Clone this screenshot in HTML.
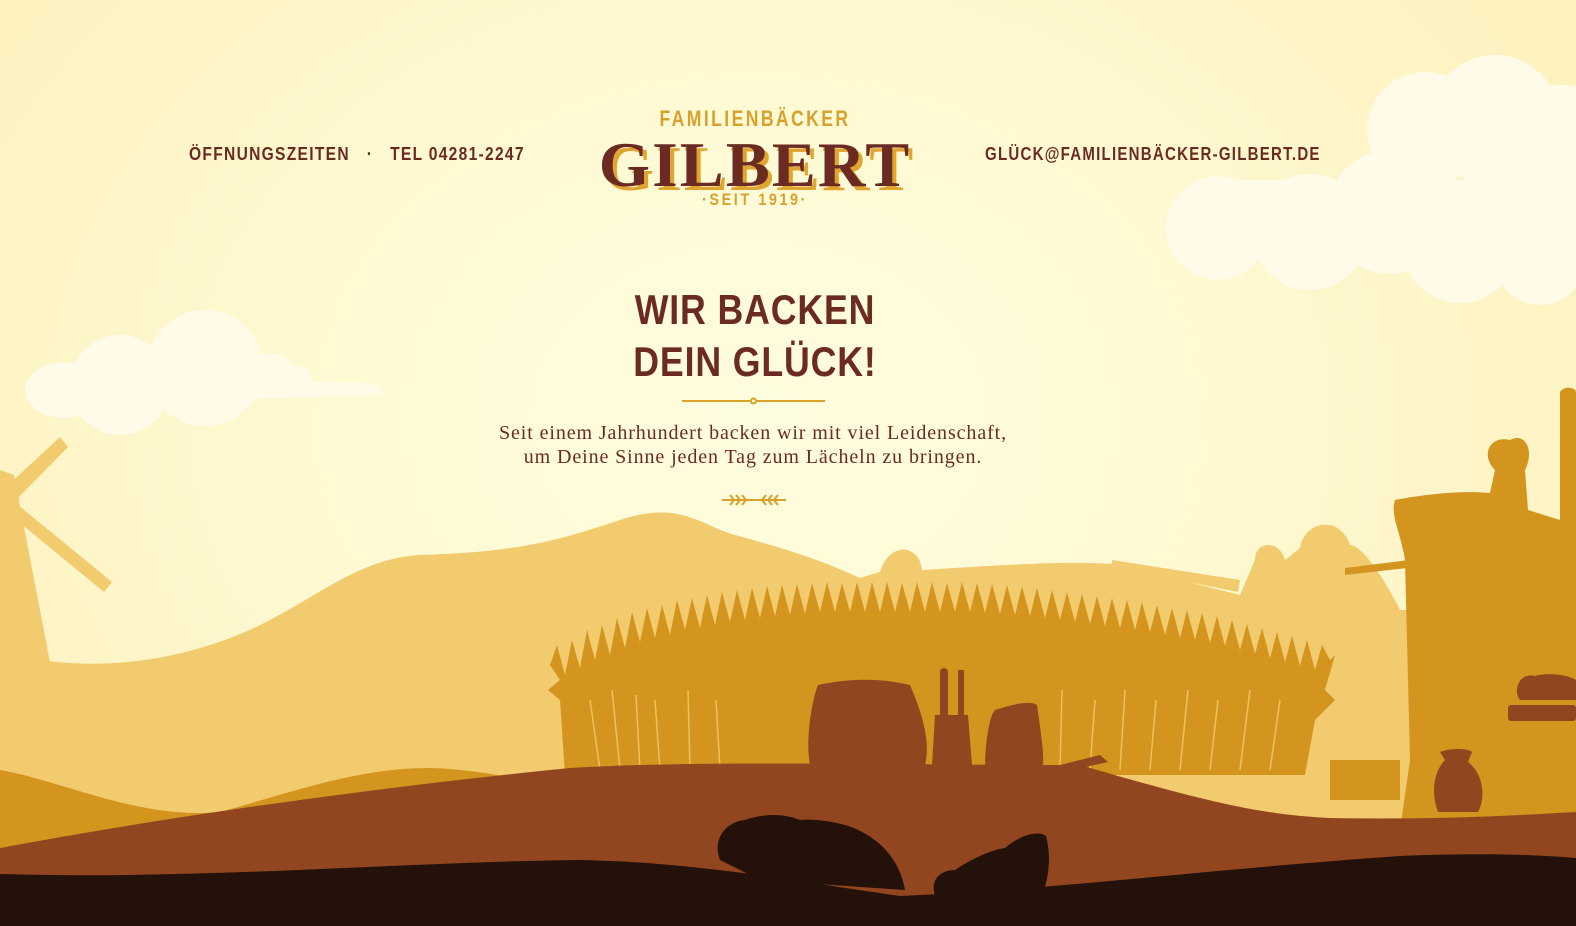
<!DOCTYPE html>
<html><head><meta charset="utf-8"><style>
html,body{margin:0;padding:0}
body{width:1576px;height:926px;overflow:hidden;position:relative;background:radial-gradient(ellipse 900px 700px at 760px 420px,#fffde0 0%,#fffad4 45%,#fdf2c0 100%);font-family:"Liberation Sans",sans-serif}
svg.bg{position:absolute;left:0;top:0}
.nav{position:absolute;top:144px;font-family:"Liberation Sans",sans-serif;font-weight:bold;font-size:18px;letter-spacing:1.5px;color:#6b2a22;transform-origin:0 0;white-space:nowrap}
.logo{position:absolute;left:580px;top:100px;width:350px;text-align:center;color:#6b2a22}
.c{position:absolute;left:0;width:350px;white-space:nowrap}
.fam{font-family:"Liberation Sans",sans-serif;font-weight:bold;color:#d7a12c;font-size:22px;letter-spacing:3px;top:6px;transform:scaleX(.8)}
.gil{font-family:"Liberation Serif",serif;font-weight:bold;font-size:64px;letter-spacing:2px;top:28px;color:#6b2a22;text-shadow:4px 4px 0 #e0a52f;transform:scaleX(1.03)}
.seit{font-family:"Liberation Sans",sans-serif;font-weight:bold;color:#d7a12c;font-size:17px;letter-spacing:3px;top:90px;transform:scaleX(.85)}
h1{position:absolute;left:0;width:1510px;top:284px;margin:0;text-align:center;font-family:"Liberation Sans",sans-serif;font-weight:bold;font-size:42px;line-height:52px;letter-spacing:1px;color:#6b2a22;transform:scaleX(.85);transform-origin:755px 0}
p{position:absolute;left:0;width:1506px;top:421px;margin:0;text-align:center;font-family:"Liberation Serif",serif;font-size:20px;line-height:24px;letter-spacing:.9px;color:#6b2a22}
</style></head><body>
<svg class="bg" width="1576" height="926" viewBox="0 0 1576 926">
<g fill="#fffbe8">
<ellipse cx="65" cy="390" rx="40" ry="28"/><circle cx="120" cy="385" r="50"/><circle cx="205" cy="368" r="58"/><circle cx="272" cy="375" r="22"/><circle cx="298" cy="380" r="14"/><path d="M60 405 L380 395 Q390 385 360 383 L240 380 Z"/>
<circle cx="1218" cy="228" r="52"/><circle cx="1310" cy="232" r="58"/><circle cx="1390" cy="212" r="62"/><circle cx="1460" cy="245" r="58"/><circle cx="1425" cy="130" r="58"/><circle cx="1495" cy="120" r="65"/><circle cx="1560" cy="180" r="95"/><circle cx="1540" cy="260" r="45"/><rect x="1218" y="180" width="358" height="80"/>
</g>
<g fill="#f2cb6e">
<path d="M0 650 C40 665 120 672 200 648 C300 620 340 560 420 555 C520 552 560 540 620 520 C680 500 700 525 735 535 C790 550 820 560 860 578 L880 572 C890 540 920 545 922 570 C1000 565 1080 560 1120 565 L1240 595 L1255 560 C1255 540 1280 540 1285 560 L1300 548 C1305 520 1340 515 1350 545 C1360 545 1380 570 1400 610 L1576 610 L1576 926 L0 926 Z"/>
<path d="M0 470 L14 475 L50 662 L0 665 Z"/>
<path d="M5 488 L60 437 L68 447 L16 500 Z"/>
<path d="M18 505 L112 582 L104 592 L14 518 Z"/>
<path d="M1112 560 L1240 580 L1238 592 L1112 567 Z"/>
</g>
<g fill="#d4951f">
<path d="M0 770 C60 780 140 820 220 812 C300 790 380 760 460 770 C520 776 560 790 560 790 L0 850 Z"/>
<path d="M565 775 L560 700 L548 690 L560 680 L550 665 L557 645 L565 675 L572 640 L580 668 L587 630 L595 660 L602 625 L610 655 L617 618 L625 648 L632 612 L640 642 L647 608 L655 638 L662 605 L670 635 L677 600 L685 630 L692 598 L700 628 L707 595 L715 625 L722 592 L730 622 L737 590 L745 620 L752 588 L760 618 L767 586 L775 616 L782 585 L790 615 L797 584 L805 614 L812 583 L820 612 L827 582 L835 612 L842 583 L850 612 L857 582 L865 612 L872 582 L880 612 L887 582 L895 612 L902 583 L910 612 L917 582 L925 612 L932 582 L940 612 L947 583 L955 612 L962 582 L970 612 L977 583 L985 613 L992 584 L1000 614 L1007 585 L1015 615 L1022 586 L1030 616 L1037 588 L1045 618 L1052 590 L1060 620 L1067 592 L1075 622 L1082 594 L1090 624 L1097 596 L1105 626 L1112 598 L1120 628 L1127 600 L1135 630 L1142 602 L1150 632 L1157 605 L1165 635 L1172 608 L1180 638 L1187 610 L1195 640 L1202 613 L1210 643 L1217 616 L1225 646 L1232 620 L1240 650 L1247 624 L1255 654 L1262 628 L1270 658 L1277 632 L1285 662 L1292 636 L1300 666 L1307 640 L1315 670 L1322 645 L1330 660 L1335 655 L1325 690 L1335 700 L1315 720 L1305 775 Z"/>
<path d="M1390 900 L1410 760 L1405 560 C1400 530 1390 515 1395 500 C1420 495 1460 490 1490 493 L1495 470 C1480 455 1490 435 1510 440 C1525 432 1535 450 1525 470 L1528 510 L1560 520 L1560 392 C1565 385 1576 388 1576 392 L1576 926 Z"/>
<path d="M1345 568 L1425 558 L1425 566 L1345 575 Z"/>
<path d="M1480 550 L1560 545 L1560 560 L1485 570 Z"/>
<circle cx="1505" cy="605" r="25"/><circle cx="1545" cy="595" r="28"/>
<path d="M1330 760 L1400 760 L1400 800 L1330 800 Z"/>
</g>
<g stroke="#f2cb6e" stroke-width="1.5" fill="none" opacity=".8">
<path d="M600 770 L590 700 M620 770 L612 690 M640 770 L636 695 M660 770 L655 700 M690 770 L688 690 M720 770 L716 700 M1060 770 L1062 690 M1090 770 L1095 700 M1120 770 L1125 690 M1150 770 L1156 700 M1180 770 L1188 690 M1210 770 L1218 700 M1240 770 L1250 690 M1270 770 L1280 700"/>
</g>
<g fill="#92461f">
<path d="M0 848 C150 820 350 790 570 768 C700 760 900 765 1080 765 C1200 800 1260 815 1330 818 C1450 820 1520 815 1576 812 L1576 926 L0 926 Z"/>
<path d="M810 765 C805 740 812 700 818 685 C850 678 880 678 910 685 C925 720 930 745 925 765 Z"/>
<path d="M932 765 L935 715 L968 715 L972 765 Z"/>
<rect x="940" y="668" width="8" height="50" rx="4"/><rect x="958" y="670" width="6" height="48"/>
<path d="M985 770 C985 740 990 715 995 710 C1010 705 1030 700 1037 705 C1042 740 1045 760 1042 770 Z"/>
<path d="M1040 770 L1100 755 L1108 762 L1050 775 Z"/>
<path d="M1438 812 C1430 790 1435 770 1445 760 L1440 752 C1450 748 1468 748 1472 752 L1468 762 C1485 775 1485 800 1478 812 Z"/>
<rect x="1508" y="705" width="68" height="16" rx="3"/>
<path d="M1520 700 C1512 690 1520 672 1535 676 C1548 672 1568 675 1576 680 L1576 700 Z"/>
</g>
<g fill="#23110a">
<path d="M0 874 C200 880 400 862 580 860 C700 862 820 885 900 896 C1050 890 1200 870 1400 856 C1500 852 1550 856 1576 858 L1576 926 L0 926 Z"/>
<path d="M720 860 C712 840 725 822 745 820 C760 815 780 812 800 820 C820 818 850 825 858 830 C880 840 900 860 905 890 L760 880 Z"/>
<path d="M935 895 C930 880 940 870 955 870 C970 860 990 850 1005 848 C1020 835 1038 830 1046 836 C1052 860 1048 880 1042 895 Z"/>
</g>
<g stroke="#d7a12c" stroke-width="2" fill="none">
<line x1="682" y1="401" x2="750" y2="401"/><line x1="757" y1="401" x2="825" y2="401"/><circle cx="753.5" cy="401" r="2.5"/>
<line x1="722" y1="500" x2="786" y2="500"/>
<path d="M730 495 l4 5 l-4 5 M736 495 l4 5 l-4 5 M742 495 l4 5 l-4 5 M766 495 l-4 5 l4 5 M772 495 l-4 5 l4 5 M778 495 l-4 5 l4 5"/>
</g>
</svg>
<div class="nav" style="left:189px;transform:scaleX(.865)">ÖFFNUNGSZEITEN &nbsp; · &nbsp; TEL 04281-2247</div>
<div class="nav" style="left:985px;transform:scaleX(.835)">GLÜCK@FAMILIENBÄCKER-GILBERT.DE</div>
<div class="logo">
<div class="c fam">FAMILIENBÄCKER</div>
<div class="c gil">GILBERT</div>
<div class="c seit">·SEIT 1919·</div>
</div>
<h1>WIR BACKEN<br>DEIN GLÜCK!</h1>
<p>Seit einem Jahrhundert backen wir mit viel Leidenschaft,<br>um Deine Sinne jeden Tag zum Lächeln zu bringen.</p>
</body></html>
